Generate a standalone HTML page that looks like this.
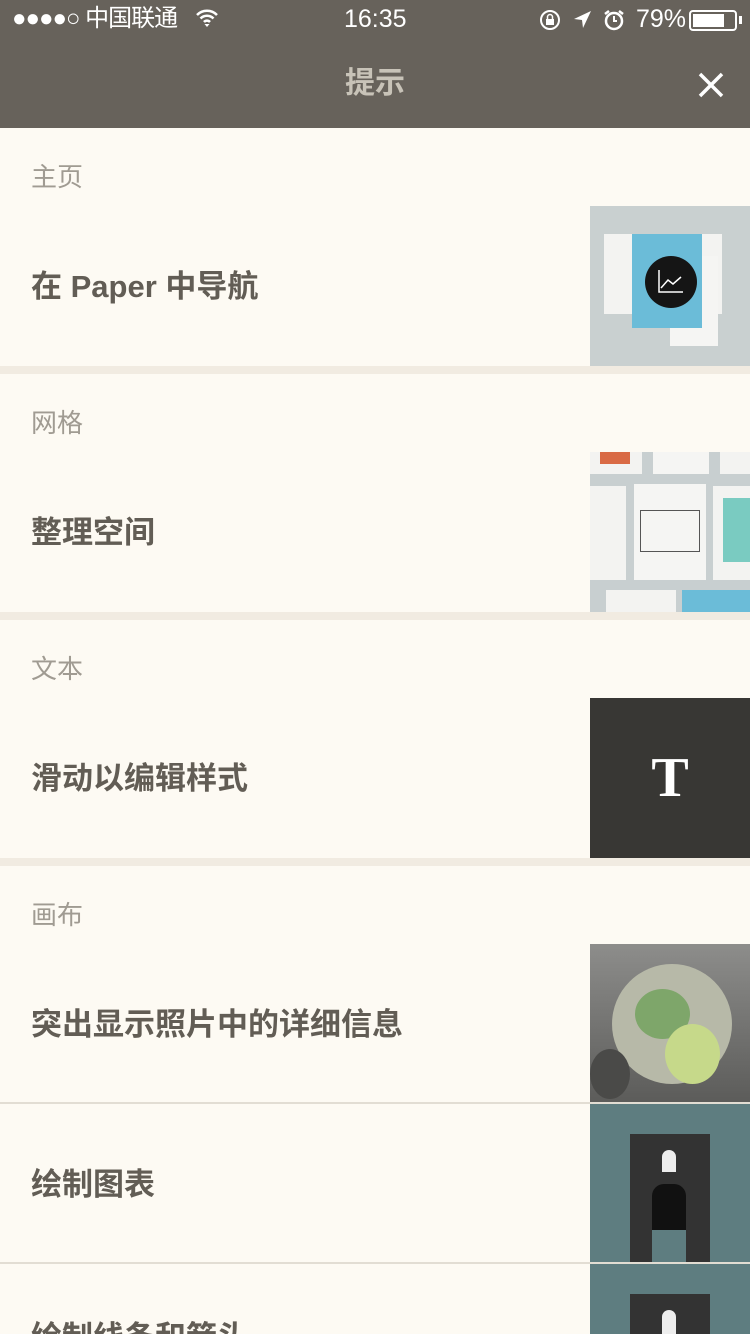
<!DOCTYPE html>
<html><head><meta charset="utf-8"><style>
*{margin:0;padding:0;box-sizing:border-box}
html{width:750px;height:1334px;overflow:hidden}
body{width:750px;height:1334px;overflow:hidden;background:#fdfaf3;font-family:"Liberation Sans","Noto Sans CJK SC",sans-serif;position:relative}
.a{position:absolute}
.bar{left:0;top:0;width:750px;height:128px;background:#67625b}
.st{color:#fff;font-size:24px;top:4px;line-height:30px}
.h{left:31px;font-size:26px;color:#a09b92;line-height:34px}
.t{left:31px;font-size:31px;font-weight:bold;color:#625d55;line-height:40px}
.sep{left:0;width:750px;height:8px;background:#f1ebe1}
.ln{left:0;width:750px;height:2px;background:#e2ddd3}
.img{left:590px;width:160px;overflow:hidden}
</style></head><body>
<div class="a bar"></div>
<div class="a st" style="left:12px;letter-spacing:-1px">●●●●○ 中国联通</div>
<svg class="a" style="left:196px;top:8px" width="22" height="20" viewBox="0 0 22 20"><path d="M1 7a14 14 0 0 1 20 0M4.5 10.5a9 9 0 0 1 13 0M8 14a4 4 0 0 1 6 0" stroke="#fff" stroke-width="2.5" fill="none"/><path d="M11 19l-2.5-3h5z" fill="#fff"/></svg>
<div class="a st" style="left:344px;font-size:25px">16:35</div>
<svg class="a" style="left:538px;top:9px" width="24" height="22"><circle cx="12" cy="11" r="9" stroke="#fff" stroke-width="2" fill="none"/><rect x="8" y="10" width="8" height="6" fill="#fff"/><path d="M9.5 10V8a2.5 2.5 0 0 1 5 0v2" stroke="#fff" stroke-width="1.5" fill="none"/></svg>
<svg class="a" style="left:572px;top:10px" width="20" height="20"><path d="M19 1L2 9l8 1 1 8z" fill="#fff"/></svg>
<svg class="a" style="left:603px;top:9px" width="22" height="22"><circle cx="11" cy="12" r="8" stroke="#fff" stroke-width="2.5" fill="none"/><path d="M11 7v5h3" stroke="#fff" stroke-width="2" fill="none"/><path d="M2 5l4-3M20 5l-4-3" stroke="#fff" stroke-width="2.5"/></svg>
<div class="a st" style="left:636px;font-size:25px">79%</div>
<div class="a" style="left:689px;top:10px;width:48px;height:21px;border:2px solid #fff;border-radius:4px;padding:2px"><div style="width:78%;height:100%;background:#fff"></div></div>
<div class="a" style="left:739px;top:16px;width:3px;height:8px;background:#fff"></div>
<div class="a" style="left:0;width:750px;top:64px;text-align:center;font-size:30px;font-weight:bold;color:#c8c3b8;line-height:40px">提示</div>
<svg class="a" style="left:698px;top:72px" width="26" height="26"><path d="M2 2l22 22M24 2L2 24" stroke="#fff" stroke-width="3.5"/></svg>

<div class="a h" style="top:160px">主页</div>
<div class="a t" style="top:267px">在 Paper 中导航</div>
<div class="a img" style="top:206px;height:160px;background:#c9d0d0">
<div class="a" style="left:14px;top:28px;width:118px;height:80px;background:#f3f3f1"></div>
<div class="a" style="left:80px;top:50px;width:48px;height:90px;background:#f5f5f3"></div>
<div class="a" style="left:42px;top:28px;width:70px;height:94px;background:#6bbcd8"></div>
<div class="a" style="left:55px;top:50px;width:52px;height:52px;border-radius:50%;background:#151515"></div>
<svg class="a" style="left:66px;top:62px" width="30" height="28"><path d="M3 2v22h24M5 20l7-8 5 4 8-7" stroke="#fff" stroke-width="1.5" fill="none"/></svg>
</div>
<div class="a sep" style="top:366px"></div>

<div class="a h" style="top:406px">网格</div>
<div class="a t" style="top:513px">整理空间</div>
<div class="a img" style="top:452px;height:160px;background:#c8cfd0">
<div class="a" style="left:0;top:0;width:52px;height:22px;background:#f3f3f1"></div>
<div class="a" style="left:10px;top:0;width:30px;height:12px;background:#d96a45"></div>
<div class="a" style="left:63px;top:0;width:56px;height:22px;background:#f5f5f3"></div>
<div class="a" style="left:130px;top:0;width:30px;height:22px;background:#f3f3f1"></div>
<div class="a" style="left:0;top:34px;width:36px;height:94px;background:#f3f3f1"></div>
<div class="a" style="left:44px;top:32px;width:72px;height:96px;background:#f5f5f3"></div>
<div class="a" style="left:50px;top:58px;width:60px;height:42px;border:1px solid #555"></div>
<div class="a" style="left:123px;top:34px;width:37px;height:94px;background:#f3f3f1"></div>
<div class="a" style="left:133px;top:46px;width:27px;height:64px;background:#7acbc1"></div>
<div class="a" style="left:16px;top:138px;width:70px;height:22px;background:#f3f3f1"></div>
<div class="a" style="left:92px;top:138px;width:68px;height:22px;background:#6bbcd8"></div>
</div>
<div class="a sep" style="top:612px"></div>

<div class="a h" style="top:652px">文本</div>
<div class="a t" style="top:759px">滑动以编辑样式</div>
<div class="a img" style="top:698px;height:160px;background:#383734;color:#fff;font-family:'Liberation Serif',serif;font-weight:bold;font-size:56px;text-align:center;line-height:160px">T</div>
<div class="a sep" style="top:858px"></div>

<div class="a h" style="top:898px">画布</div>
<div class="a t" style="top:1005px">突出显示照片中的详细信息</div>
<div class="a img" style="top:944px;height:158px;background:linear-gradient(#8d8d8b,#5c5c5a)">
<div class="a" style="left:22px;top:20px;width:120px;height:120px;border-radius:50%;background:#b7b9a8"></div>
<div class="a" style="left:45px;top:45px;width:55px;height:50px;border-radius:50%;background:#7ea66a"></div>
<div class="a" style="left:75px;top:80px;width:55px;height:60px;border-radius:50%;background:#c6d98a"></div>
<div class="a" style="left:0;top:105px;width:40px;height:50px;border-radius:50%;background:#4a4a48"></div>
</div>
<div class="a ln" style="top:1102px"></div>
<div class="a t" style="top:1165px">绘制图表</div>
<div class="a img" style="top:1104px;height:158px;background:#5e7d80">
<div class="a" style="left:40px;top:30px;width:80px;height:128px;background:#333"></div>
<div class="a" style="left:62px;top:80px;width:34px;height:46px;background:#111;border-radius:12px 12px 0 0"></div>
<div class="a" style="left:72px;top:46px;width:14px;height:22px;background:#eee;border-radius:7px 7px 0 0"></div>
<div class="a" style="left:62px;top:126px;width:34px;height:32px;background:#5e7d80"></div>
</div>
<div class="a ln" style="top:1262px"></div>
<div class="a t" style="top:1318px">绘制线条和箭头</div>
<div class="a img" style="top:1264px;height:70px;background:#5e7d80">
<div class="a" style="left:40px;top:30px;width:80px;height:40px;background:#333"></div>
<div class="a" style="left:72px;top:46px;width:14px;height:24px;background:#eee;border-radius:7px 7px 0 0"></div>
</div>
</body></html>
